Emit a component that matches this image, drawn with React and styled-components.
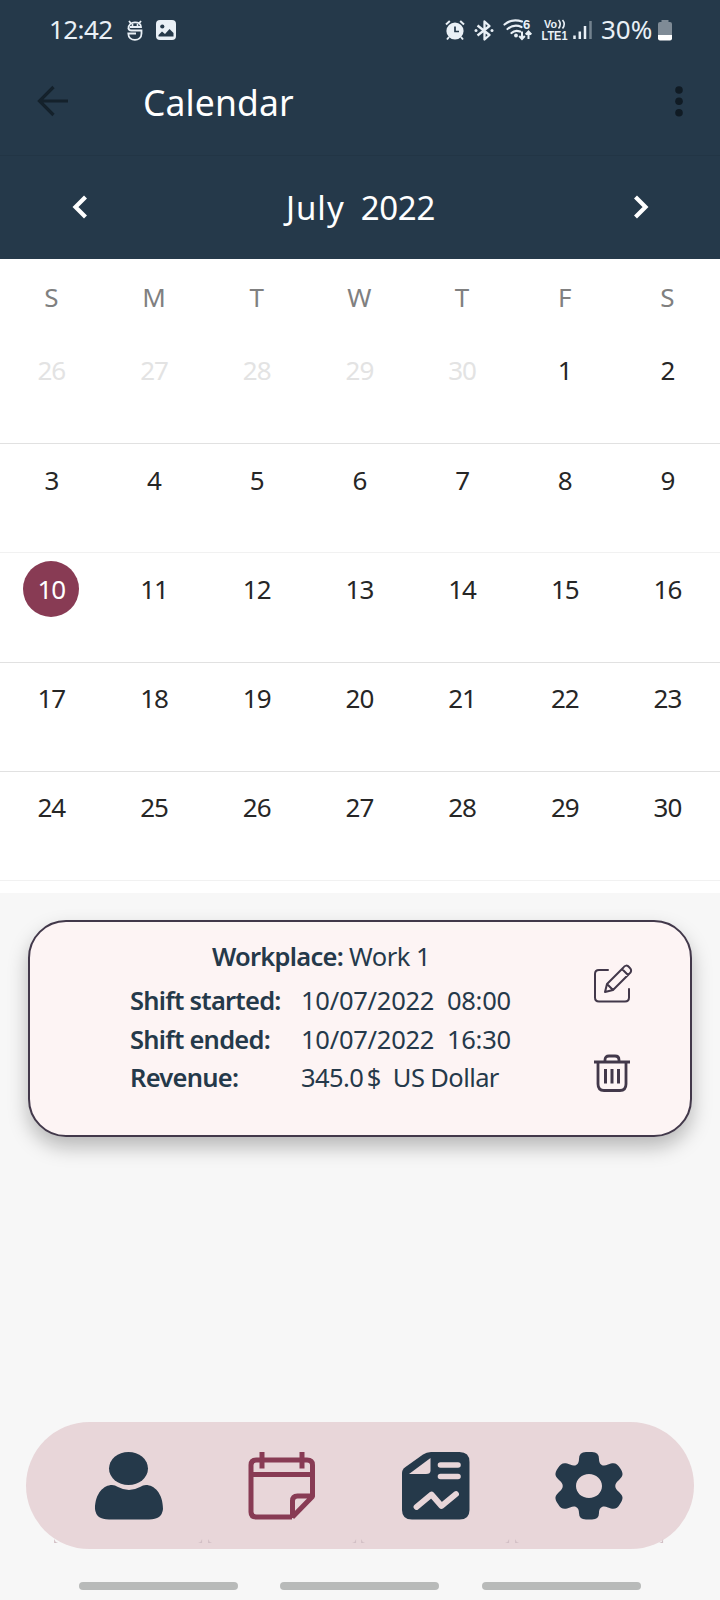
import React from "react";
import styled, { createGlobalStyle } from "styled-components";

const navy = "#25394a";
const plum = "#883b54";
const ink = "#42384a";
const blush = "#e8d6d9";

const GlobalStyle = createGlobalStyle`
  * { box-sizing: border-box; }
  body { margin: 0; background: #f7f7f7; font-family: "Noto Sans", "Open Sans", sans-serif; }
  svg { display: block; flex: none; overflow: visible; }
`;

const Screen = styled.div`
  width: 720px;
  height: 1600px;
  display: flex;
  flex-direction: column;
  overflow: hidden;
  background: #f7f7f7;
`;

const Header = styled.header`
  height: 259px;
  flex: none;
  background: ${navy};
  color: #fff;
`;

const StatusBar = styled.div`
  height: 60px;
  display: flex;
  align-items: center;
  padding: 0 48px 0 49px;
  color: #e9f0f6;
`;

const StatusText = styled.span`
  font-size: 26px;
  line-height: 36px;
  padding-bottom: 2px;
  font-weight: 400;
  width: ${(p) => p.$w}px;
  letter-spacing: ${(p) => p.$ls}px;
  white-space: nowrap;
`;

const Spacer = styled.div`
  flex: 1;
`;

const AppBar = styled.div`
  height: 96px;
  display: flex;
  align-items: center;
  padding: 0 33px 14px 37px;
  border-bottom: 1px solid #223545;
`;

const Title = styled.h1`
  margin: 0 0 0 74px;
  padding-top: 2px;
  flex: 1;
  font-size: 35.5px;
  line-height: 50px;
  font-weight: 400;
  letter-spacing: 0.1px;
`;

const MonthBar = styled.div`
  height: 103px;
  display: flex;
  align-items: center;
  justify-content: space-between;
  padding: 0 71px 1px 72px;
`;

const Month = styled.h2`
  margin: 0;
  display: flex;
  gap: 16px;
  padding-top: 1px;
  font-size: 33px;
  line-height: 46px;
  font-weight: 400;
  letter-spacing: -0.3px;
`;

const MonthName = styled.span`
  letter-spacing: 1px;
`;

const Calendar = styled.section`
  height: 634px;
  flex: none;
  background: #fff;
  padding-top: 2px;
  overflow: hidden;
`;

const Week = styled.div`
  display: grid;
  grid-template-columns: repeat(7, 102.7px);
  justify-items: center;
  height: ${(p) => p.$h}px;
  padding-top: ${(p) => p.$pt}px;
  border-bottom: 1px solid ${(p) => p.$line || "transparent"};
`;

const Day = styled.span`
  width: 56px;
  height: 56px;
  border-radius: 50%;
  display: flex;
  align-items: center;
  justify-content: center;
  font-size: 26px;
  font-weight: 400;
  letter-spacing: ${(p) => (p.$head ? 0 : -1)}px;
  color: ${(p) => (p.$selected ? "#fff" : p.$head ? "#808080" : p.$out ? "#e3e3e3" : "#262626")};
  background: ${(p) => (p.$selected ? plum : "transparent")};
`;

const ShiftCard = styled.article`
  width: 664px;
  height: 217px;
  flex: none;
  margin: 27px 0 0 28px;
  border: 2px solid ${ink};
  border-radius: 38px;
  background: #fdf4f4;
  box-shadow: 0 10px 20px rgba(0, 0, 0, 0.26);
  display: flex;
  color: ${navy};
`;

const ShiftBody = styled.div`
  width: 536px;
  padding: 15px 0 0 100px;
`;

const Workplace = styled.div`
  padding-left: 82px;
  font-size: 25.5px;
  line-height: 38px;
  letter-spacing: -0.5px;
  margin-bottom: 6px;
  white-space: nowrap;
`;

const Label = styled.b`
  font-weight: 600;
  letter-spacing: -0.75px;
`;

const Detail = styled.div`
  display: grid;
  grid-template-columns: 171px 1fr;
  font-size: 25.5px;
  line-height: 38.7px;
  white-space: pre;
`;

const Value = styled.span`
  letter-spacing: ${(p) => p.$ls}px;
`;

const Actions = styled.div`
  display: flex;
  flex-direction: column;
  padding-top: 42px;
  gap: 49px;
  margin-left: 26px;
`;

const NavBar = styled.nav`
  width: 668px;
  height: 127px;
  flex: none;
  margin: 285px 0 0 26px;
  padding: 30px 30px 6px 28px;
  border-radius: 64px;
  background: ${blush};
  display: flex;
  justify-content: space-between;
`;

const Tab = styled.div`
  width: 149px;
  display: flex;
  flex-direction: column;
  align-items: center;
  justify-content: space-between;
`;

const TabCorners = styled.div`
  width: 100%;
  display: flex;
  justify-content: space-between;
`;

const Gestures = styled.div`
  display: flex;
  gap: 42.400px;
  margin: 33px 0 0 79px;
`;

const GestureBar = styled.span`
  width: 159px;
  height: 8px;
  border-radius: 4px;
  background: #b8bab9;
`;

const CreatureIcon = () => (
  <svg width="16" height="21" viewBox="0 0 16 21" fill="none" stroke="currentColor" strokeWidth="1.800">
    <path d="M2 1 4 3.500M14 1 12 3.500M1.500 8.500C1.500 0.500 14 0.500 14 7H3" />
    <path d="M1.500 8Q1.500 10.500 4.500 10.500H14.500V13.500C14.500 22 1.300 22 1.300 13.500H9" />
    <path d="M5.500 4v3M10.500 4v3" strokeWidth="1.600" />
  </svg>
);

const ImageIcon = () => (
  <svg width="20" height="20" viewBox="0 0 20 20">
    <rect width="20" height="20" rx="4" fill="currentColor" />
    <circle cx="6.300" cy="6.500" r="2.100" fill={navy} />
    <path d="M2.500 16.500V15l3.500-3.500 3 2.500 4.500-5 4 4v3.500z" fill={navy} />
  </svg>
);

const AlarmIcon = () => (
  <svg width="20" height="21" viewBox="0 0 20 21" fill="none" stroke="currentColor">
    <circle cx="10" cy="11" r="8.600" fill="currentColor" stroke="none" />
    <path d="M1 4.500 4.800 1M19 4.500 15.200 1M4 17l-2 2.500M16 17l2 2.500" strokeWidth="2" />
    <path d="M10 6.500v5h4" stroke={navy} strokeWidth="1.700" />
  </svg>
);

const BluetoothIcon = () => (
  <svg width="20" height="21" viewBox="0 0 20 21" fill="none" stroke="currentColor" strokeWidth="2.300" strokeLinejoin="round">
    <path d="M3.500 5.500 15.500 15 10.500 19.500V1.500L15.500 6 3.500 15.500" />
    <circle cx="2" cy="10.500" r="1.500" fill="currentColor" stroke="none" />
    <circle cx="18" cy="10.500" r="1.500" fill="currentColor" stroke="none" />
  </svg>
);

const SmallGlyphs = styled.text`
  font-family: "Liberation Sans", sans-serif;
  font-weight: 700;
  fill: currentColor;
`;

const WifiIcon = () => (
  <svg width="30" height="24" viewBox="0 0 30 24" fill="none" stroke="currentColor" strokeWidth="2.200">
    <path d="M1.500 6.500Q9 0 19 3.500M4.500 11Q11 5.500 18.500 9M8.500 15Q12 11.500 17 13.500" strokeLinecap="round" />
    <circle cx="13" cy="17.500" r="1.900" fill="currentColor" stroke="none" />
    <path d="M19 13.500v7.500M16.200 18l2.800 3 2.800-3M25.500 21V13.500M22.700 16.500l2.800-3 2.800 3" strokeWidth="2" />
    <SmallGlyphs x="20" y="10.500" fontSize="13" stroke="none">6</SmallGlyphs>
  </svg>
);

const VolteIcon = () => (
  <svg width="27" height="24" viewBox="0 0 27 24">
    <SmallGlyphs x="3" y="10" fontSize="11" textLength="13" lengthAdjust="spacingAndGlyphs">Vo</SmallGlyphs>
    <path d="M17.500 2Q21 6 17.500 10.500M21.500 2Q25 6 21.500 10.500" fill="none" stroke="currentColor" strokeWidth="1.600" />
    <SmallGlyphs x="0.500" y="22" fontSize="12" textLength="26" lengthAdjust="spacingAndGlyphs">LTE1</SmallGlyphs>
  </svg>
);

const SignalIcon = () => (
  <svg width="19" height="20" viewBox="0 0 19 20" stroke="currentColor" strokeWidth="2.500">
    <path d="M1.500 15.500V19M6.800 11.500V19M12 6V19" />
    <path d="M17.500 1V19" opacity=".4" />
  </svg>
);

const BatteryIcon = () => (
  <svg width="14" height="21" viewBox="0 0 14 21">
    <path d="M3.500 0h7v2H12q2 0 2 2V15H0V4q0-2 2-2h1.500z" fill="#7f8b96" />
    <path d="M0 15h14v3.500q0 2-2 2H2q-2 0-2-2z" fill="#fff" />
  </svg>
);

const BackIcon = () => (
  <svg width="32" height="32" viewBox="0 0 32 32" fill="none" stroke="#14212b" strokeWidth="3.200">
    <path d="M31 16H3M16.500 2 2.500 16l14 14" />
  </svg>
);

const MoreIcon = () => (
  <svg width="16" height="32" viewBox="0 0 16 32" fill="#101b24">
    <circle cx="8" cy="5" r="3.800" />
    <circle cx="8" cy="16.300" r="3.800" />
    <circle cx="8" cy="27.700" r="3.800" />
  </svg>
);

const Chevron = ({ d }) => (
  <svg width="16" height="24" viewBox="0 0 16 24" fill="none" stroke="#fff" strokeWidth="4.200">
    <path d={d} />
  </svg>
);

const EditIcon = () => (
  <svg width="40" height="40" viewBox="0 0 40 40" fill="none" stroke={ink} strokeWidth="2" strokeLinejoin="round">
    <path d="M16 6H7Q3 6 3 10V33.500Q3 37.500 7 37.500H33Q37 37.500 37 33.500V25" strokeLinecap="round" />
    <path d="M13 28 15 20 31 4Q34-.5 37.500 3.500 41 7 37 10L21 26ZM15 20l6 6M30 5l6.500 6.500" />
  </svg>
);

const TrashIcon = () => (
  <svg width="40" height="40" viewBox="0 0 40 40" fill="none" stroke={ink} strokeWidth="2.800">
    <path d="M2 9H38M13 9V7Q13 3 17 3H23Q27 3 27 7V9" />
    <path d="M6 9V31Q6 37.500 12 37.500H28Q34 37.500 34 31V9" />
    <path d="M13.500 16V30.500M20 16V30.500M26.500 16V30.500" strokeWidth="3" />
  </svg>
);

const UserIcon = () => (
  <svg width="68" height="68" viewBox="0 0 68 68" fill={navy}>
    <ellipse cx="33.500" cy="16.500" rx="19.500" ry="16.500" />
    <path d="M17 33C9 33 0 41 0 57Q1 67.500 14 67.500H54Q67 67.500 68 57C68 41 59 33 51 33Q48 33 45 35 34 41 23 35 20 33 17 33Z" />
  </svg>
);

const CalendarIcon = () => (
  <svg width="68" height="68" viewBox="0 0 68 68" fill="none" stroke={plum} strokeWidth="5" strokeLinejoin="bevel">
    <path d="M44 65H8.500Q3 65 3 60V13Q3 8 8.500 8H59Q64.500 8 64.500 13V44.500L44.500 65V49Q44.500 44 49.500 44H64.500M3 22.500H64" />
    <path d="M14 0V16.500M54 0V16.500" />
  </svg>
);

const ReportIcon = () => (
  <svg width="68" height="68" viewBox="0 0 68 68">
    <path d="M29 0H57.500Q67.500 0 67.500 10V58Q67.500 67.500 57.500 67.500H10Q0 67.500 0 58V21Q0 17.500 3.500 15L21 2.500Q24.500 0 29 0Z" fill={navy} />
    <path d="M28.500 6V18.500Q28.500 22 24 22H7Z" fill={blush} />
    <path d="M38.500 13H56M38.500 24.500H56" stroke={blush} strokeWidth="5.600" strokeLinecap="round" />
    <path d="M14.500 55 29.500 42.500 39.500 54 54 42" stroke={blush} strokeWidth="5.800" fill="none" strokeLinecap="round" strokeLinejoin="round" />
  </svg>
);

const GearIcon = () => (
  <svg width="68" height="68" viewBox="0 0 68 68">
    <path fill={navy} fillRule="evenodd" d="M31 0H37Q44 0 44 7C44 13 48 15 53 12.500 59 10 62 11 65 16 69 22 68 24 64 28 59 32 59 36 64 40 68 44 69 46 65 52 62 57 59 58 53 55.500 48 53 44 55 44 61Q44 67.500 37 67.500H31Q24 67.500 24 61C24 55 20 53 15 55.500 9 58 6 57 3 52-1 46 0 44 4 40 9 36 9 32 4 28 0 24-1 22 3 16 6 11 9 10 15 12.500 20 15 24 13 24 7Q24 0 31 0ZM34 22C27 22 21 27 21 34S27 46 34 46 47 41 47 34 41 22 34 22Z" />
  </svg>
);

const Corner = ({ d }) => (
  <svg width="5" height="4" viewBox="0 0 6 5" fill="#d2bfc5">
    <path d={d} />
  </svg>
);

const weeks = [
  { days: [26, 27, 28, 29, 30, 1, 2], h: 109, pt: 7, line: "#e1e1e1", out: 5 },
  { days: [3, 4, 5, 6, 7, 8, 9], h: 109, pt: 7.500, line: "#f1f1f1" },
  { days: [10, 11, 12, 13, 14, 15, 16], h: 110, pt: 8, line: "#e1e1e1" },
  { days: [17, 18, 19, 20, 21, 22, 23], h: 109, pt: 7, line: "#e1e1e1" },
  { days: [24, 25, 26, 27, 28, 29, 30], h: 109, pt: 7, line: "#f1f1f1" },
];

const details = [
  ["Shift started:", "10/07/2022  08:00", -0.250],
  ["Shift ended:", "10/07/2022  16:30", -0.250],
  ["Revenue:", "345.0\u2009$  US Dollar", -0.600],
];

const StatusGap = styled.span`
  width: ${(p) => p.$w}px;
`;

export default function App() {
  return (
    <Screen>
      <GlobalStyle />
      <Header>
        <StatusBar>
          <StatusText $w={78} $ls={-0.6}>12:42</StatusText>
          <CreatureIcon />
          <StatusGap $w={13} />
          <ImageIcon />
          <Spacer />
          <AlarmIcon />
          <StatusGap $w={9} />
          <BluetoothIcon />
          <StatusGap $w={9} />
          <WifiIcon />
          <StatusGap $w={8} />
          <VolteIcon />
          <StatusGap $w={5} />
          <SignalIcon />
          <StatusGap $w={9} />
          <StatusText $w={57} $ls={0}>30%</StatusText>
          <BatteryIcon />
        </StatusBar>
        <AppBar>
          <BackIcon />
          <Title>Calendar</Title>
          <MoreIcon />
        </AppBar>
        <MonthBar>
          <Chevron d="M13.500 2 3.500 12l10 10" />
          <Month><MonthName>July</MonthName> <span>2022</span></Month>
          <Chevron d="M2.500 2l10 10-10 10" />
        </MonthBar>
      </Header>
      <Calendar>
        <Week $h={74} $pt={8}>
          {["S", "M", "T", "W", "T", "F", "S"].map((d, i) => (
            <Day key={i} $head>{d}</Day>
          ))}
        </Week>
        {weeks.map((w, r) => (
          <Week key={r} $h={w.h} $pt={w.pt} $line={w.line}>
            {w.days.map((d, i) => (
              <Day key={d} $out={i < w.out} $selected={d === 10}>{d}</Day>
            ))}
          </Week>
        ))}
      </Calendar>
      <ShiftCard>
        <ShiftBody>
          <Workplace><Label>Workplace:</Label> Work 1</Workplace>
          {details.map(([label, value, ls]) => (
            <Detail key={label}>
              <Label>{label}</Label>
              <Value $ls={ls}>{value}</Value>
            </Detail>
          ))}
        </ShiftBody>
        <Actions>
          <EditIcon />
          <TrashIcon />
        </Actions>
      </ShiftCard>
      <NavBar>
        {[UserIcon, CalendarIcon, ReportIcon, GearIcon].map((Icon, i) => (
          <Tab key={i}>
            <Icon />
            <TabCorners>
              <Corner d="M0 0Q1 4 5 5H0Z" />
              <Corner d="M5 0Q4 4 0 5H5Z" />
            </TabCorners>
          </Tab>
        ))}
      </NavBar>
      <Gestures>
        <GestureBar />
        <GestureBar />
        <GestureBar />
      </Gestures>
    </Screen>
  );
}
